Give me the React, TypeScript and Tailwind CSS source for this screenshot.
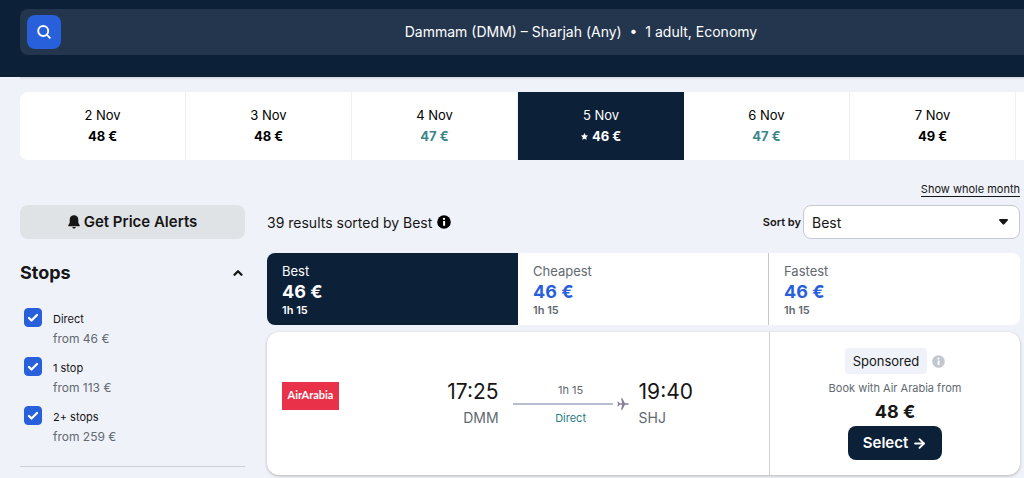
import { ArrowRight, Check, ChevronUp } from "lucide-react";

type Day = { label: string; price: string; tone: "normal" | "low" | "selected" };

const days: Day[] = [
  { label: "2 Nov", price: "48 €", tone: "normal" },
  { label: "3 Nov", price: "48 €", tone: "normal" },
  { label: "4 Nov", price: "47 €", tone: "low" },
  { label: "5 Nov", price: "46 €", tone: "selected" },
  { label: "6 Nov", price: "47 €", tone: "low" },
  { label: "7 Nov", price: "49 €", tone: "normal" },
];

const stops = [
  { id: "direct", label: "Direct", price: "from 46 €" },
  { id: "one-stop", label: "1 stop", price: "from 113 €" },
  { id: "two-stops", label: "2+ stops", price: "from 259 €" },
];

const sorts = ["Best", "Cheapest", "Fastest"];

function InfoIcon({ className }: { className: string }) {
  return (
    <svg viewBox="0 0 14 14" className={className} aria-hidden="true">
      <circle cx="7" cy="7" r="6.8" fill="currentColor" />
      <circle cx="7" cy="3.9" r="1.15" fill="#fff" />
      <path d="M5.9 5.900h2.200v4.800H6.100V5.900z" fill="#fff" />
    </svg>
  );
}

function BellIcon() {
  return (
    <svg viewBox="0 0 12 14" className="h-[14px] w-3" fill="currentColor" aria-hidden="true">
      <path d="M6 .3C3.4.3 1.700 2.100 1.700 4.600v3.200L.3 10.200c-.3.600 0 1 .6 1h10.200c.6 0 .9-.4.600-1l-1.400-2.400V4.600C10.300 2.100 8.600.3 6 .3z" />
      <path d="M4.200 12.100h3.600c-.2.900-.9 1.500-1.800 1.500s-1.600-.6-1.800-1.500z" />
    </svg>
  );
}

function PlaneIcon() {
  return (
    <svg viewBox="0 0 12 12" className="size-3 text-[#857f98]" fill="currentColor" aria-hidden="true">
      <path d="M11 5.200H7.900L5.300.3H4l1.200 4.900H2.600L1.500 3.800H.4L1 6l-.6 2.200h1.100l1.100-1.400h2.600L4 11.700h1.300l2.600-4.900H11c1.100 0 1.100-1.600 0-1.600z" />
    </svg>
  );
}

function Header() {
  return (
    <header className="bg-[#0c2038] pt-[9px] pb-[22px] pl-5">
      <div className="flex items-center rounded-l-lg bg-[#24364e] py-[6px] pl-[7px]">
        <button
          type="button"
          aria-label="Search"
          className="flex size-[34px] shrink-0 items-center justify-center rounded-lg bg-[#2860dc] text-white"
        >
          <svg viewBox="0 0 14 14" className="size-[14px]" fill="none" stroke="currentColor" strokeWidth="1.900" aria-hidden="true">
            <circle cx="6.200" cy="6" r="5" />
            <path d="M9.700 9.700l3.700 3.700" />
          </svg>
        </button>
        <p className="flex-1 pl-[77px] text-center text-[14px] leading-5 text-white">
          Dammam (DMM) – Sharjah (Any) &nbsp;•&nbsp; 1 adult, Economy
        </p>
      </div>
    </header>
  );
}

function DayStrip() {
  return (
    <div className="ml-5 flex overflow-hidden rounded-l-lg bg-white">
      {days.map((day) => (
        <button
          key={day.label}
          type="button"
          className={
            day.tone === "selected"
              ? "flex h-[68px] w-[166px] shrink-0 flex-col items-center justify-center bg-[#0c2038] text-[13px] leading-[21px] text-white"
              : "flex h-[68px] w-[166px] shrink-0 flex-col items-center justify-center border-r border-[#eff1f5] text-[13px] leading-[21px] text-black"
          }
        >
          <span>{day.label}</span>
          <span
            className={
              day.tone === "low"
                ? "flex items-center gap-1 font-bold text-[#3b868a]"
                : "flex items-center gap-1 font-bold"
            }
          >
            {day.tone === "selected" && (
              <svg viewBox="0 0 10 10" className="size-[7px]" fill="currentColor" aria-hidden="true">
                <path d="M5 0l1.600 3.200 3.400.5-2.500 2.500.6 3.600L5 8.100 1.900 9.800l.6-3.600L0 3.700l3.400-.5z" />
              </svg>
            )}
            {day.price}
          </span>
        </button>
      ))}
    </div>
  );
}

function Sidebar() {
  return (
    <aside className="w-[225px] shrink-0">
      <button
        type="button"
        className="flex h-[34px] w-full items-center justify-center gap-1 rounded-lg bg-[#e0e3e6] text-[15px] font-semibold text-[#161616]"
      >
        <BellIcon />
        Get Price Alerts
      </button>
      <section className="border-b border-[#c9ced9] pb-5">
        <button type="button" aria-expanded="true" className="mt-5 flex w-full items-center justify-between text-lg leading-7 font-bold text-[#161616]">
          Stops
          <ChevronUp className="size-[14px]" strokeWidth={4} />
        </button>
        <ul className="mt-[21px] flex flex-col gap-[9px]">
          {stops.map((stop) => (
            <li key={stop.id} className="flex pl-1">
              <span className="grid h-[19px] w-[18px] shrink-0">
                <input
                  id={stop.id}
                  type="checkbox"
                  defaultChecked
                  className="peer col-start-1 row-start-1 appearance-none rounded-[4px] border border-[#2860dc] bg-white checked:bg-[#2860dc]"
                />
                <Check
                  className="pointer-events-none col-start-1 row-start-1 hidden size-3 place-self-center text-white peer-checked:block"
                  strokeWidth={4.5}
                />
              </span>
              <label htmlFor={stop.id} className="pt-px pl-[11px]">
                <span className="block text-[11px] leading-5 text-[#161616]">{stop.label}</span>
                <span className="block text-[12px] leading-[19px] text-[#626971]">{stop.price}</span>
              </label>
            </li>
          ))}
        </ul>
      </section>
    </aside>
  );
}

function SortTabs() {
  return (
    <div className="mt-[14px] grid h-[72px] grid-cols-3 overflow-hidden rounded-lg bg-white">
      {sorts.map((name, i) => (
        <button
          key={name}
          type="button"
          className={
            i === 0
              ? "bg-[#0c2038] px-[15px] text-left text-white"
              : i === 1
                ? "border-r border-[#c6c9d3] px-[15px] text-left text-[#626971]"
                : "px-[15px] text-left text-[#626971]"
          }
        >
          <span className="block text-[13px] leading-5">{name}</span>
          <span className={i === 0 ? "block text-lg leading-[21px] font-bold" : "block text-lg leading-[21px] font-bold text-[#2860dc]"}>
            46 €
          </span>
          <span className="block text-[11px] leading-4 font-semibold">1h 15</span>
        </button>
      ))}
    </div>
  );
}

function FlightCard() {
  return (
    <article className="mt-[7px] flex h-[143px] rounded-xl bg-white shadow-[0_1px_3px_rgba(37,32,31,0.3)]">
      <div className="flex flex-1 items-center pl-[15px]">
        <div className="mb-4 flex h-[28px] w-[57px] shrink-0 items-center justify-center bg-[#e93249] font-['Lato','Inter',sans-serif] text-[11px] font-bold text-white">
          AirArabia
        </div>
        <div className="flex flex-1 items-center justify-end pt-px pr-[76px]">
          <div className="text-right">
            <p className="text-[21px] leading-7 text-[#161616]">17:25</p>
            <p className="text-[14px] leading-6 text-[#626971]">DMM</p>
          </div>
          <div className="mr-[10px] ml-[14px] w-[116px] text-[11px] leading-4">
            <p className="text-center text-[#626971]">1h 15</p>
            <div className="flex items-center gap-1">
              <span className="h-0.5 flex-1 bg-[#b9bece]" />
              <PlaneIcon />
            </div>
            <p className="text-center text-[#278082]">Direct</p>
          </div>
          <div>
            <p className="text-[21px] leading-7 text-[#161616]">19:40</p>
            <p className="text-[14px] leading-6 text-[#626971]">SHJ</p>
          </div>
        </div>
      </div>
      <div className="flex w-[251px] flex-col items-center border-l border-[#cfd1d8] pt-4">
        <div className="flex items-center gap-[5px]">
          <span className="rounded bg-[#eff2f8] px-2 py-[3px] text-[13px] leading-5 text-[#161616]">Sponsored</span>
          <InfoIcon className="size-[13px] text-[#c1c6cf]" />
        </div>
        <p className="mt-[6px] text-[11px] leading-4 text-[#626971]">Book with Air Arabia from</p>
        <p className="mt-1 text-lg leading-6 font-bold text-[#161616]">48 €</p>
        <button
          type="button"
          className="mt-[2px] flex h-[34px] items-center gap-1 rounded-lg bg-[#0c2038] px-[15px] text-[15px] font-semibold text-white"
        >
          Select
          <ArrowRight className="size-[15px]" strokeWidth={3} />
        </button>
      </div>
    </article>
  );
}

export default function App() {
  return (
    <div className="min-h-screen bg-[#eff2f8] font-['Inter','Liberation_Sans',sans-serif]">
      <Header />
      <div className="ml-5 h-[15px] bg-linear-to-b from-[#d3d7de] to-[#eff2f8] to-20%" />
      <DayStrip />
      <div className="flex justify-end pt-[22px] pr-1">
        <a href="#month" className="border-b border-[#161616] text-[11px] leading-[14px] text-[#161616]">
          Show whole month
        </a>
      </div>
      <div className="flex gap-[22px] pt-2 pr-1 pl-5">
        <Sidebar />
        <main className="min-w-0 flex-1">
          <div className="flex items-center">
            <p className="flex flex-1 items-center gap-[5px] text-[14px] text-[#161616]">
              39 results sorted by Best
              <InfoIcon className="size-[14px] text-black" />
            </p>
            <label htmlFor="sort" className="pr-[2px] text-[11px] font-semibold text-[#161616]">
              Sort by
            </label>
            <div className="grid w-[217px] items-center">
              <select
                id="sort"
                className="col-start-1 row-start-1 h-[34px] appearance-none rounded-lg border border-[#c6c9d3] bg-white px-2 text-[14px] text-[#161616]"
              >
                <option>Best</option>
                <option>Cheapest</option>
                <option>Fastest</option>
              </select>
              <svg viewBox="0 0 9 6" className="pointer-events-none col-start-1 row-start-1 mr-3 h-[6px] w-[9px] justify-self-end" fill="#161616" aria-hidden="true">
                <path d="M1 0h7c.9 0 1.200.8.700 1.400L5.300 5.300c-.5.500-1.100.5-1.600 0L.3 1.400C-.2.8.1 0 1 0z" />
              </svg>
            </div>
          </div>
          <SortTabs />
          <FlightCard />
        </main>
      </div>
    </div>
  );
}
